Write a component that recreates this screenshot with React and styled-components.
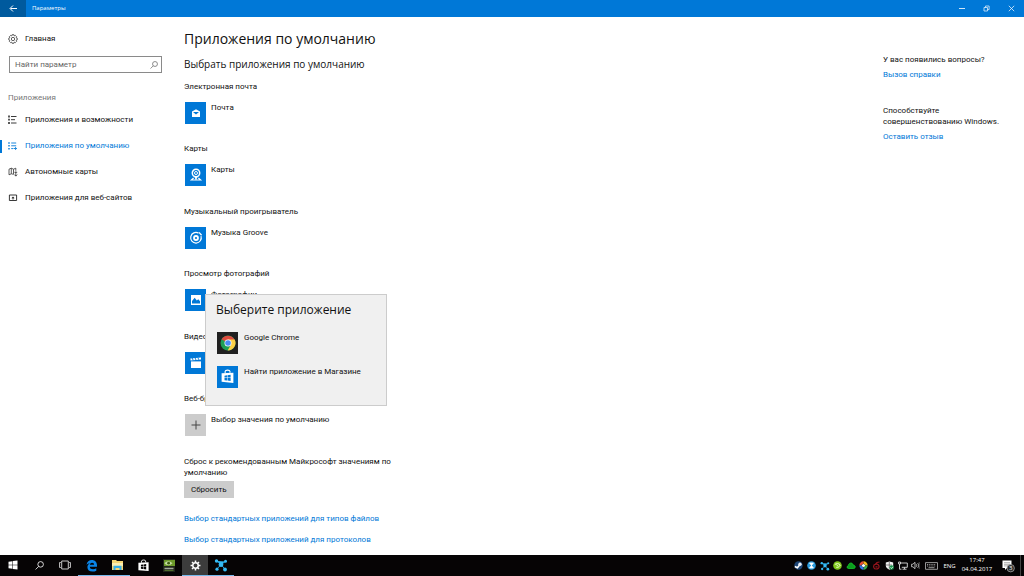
import styled, { createGlobalStyle } from "styled-components";

const sections = [
  { label: "Электронная почта", app: "Почта", icon: <MailIcon /> },
  { label: "Карты", app: "Карты", icon: <MapsIcon /> },
  { label: "Музыкальный проигрыватель", app: "Музыка Groove", icon: <GrooveIcon /> },
  { label: "Просмотр фотографий", app: "Фотографии", icon: <PhotoIcon /> },
  { label: "Видео", app: "Кино и ТВ", icon: <VideoIcon /> },
];

const menu = [
  { text: "Приложения и возможности", icon: <ListIcon /> },
  { text: "Приложения по умолчанию", icon: <DefaultsIcon />, active: true },
  { text: "Автономные карты", icon: <OfflineMapIcon /> },
  { text: "Приложения для веб-сайтов", icon: <SitesIcon /> },
];

const pinned = [
  { name: "Пуск", icon: <WindowsIcon /> },
  { name: "Поиск", icon: <SearchIcon size={9} /> },
  { name: "Представление задач", icon: <TaskViewIcon /> },
  { name: "Microsoft Edge", icon: <EdgeIcon />, open: true },
  { name: "Проводник", icon: <FolderIcon />, open: true },
  { name: "Магазин", icon: <StoreIcon size={13} hole="#060405" /> },
  { name: "NVIDIA", icon: <NvidiaIcon /> },
  { name: "Параметры", icon: <CogIcon />, open: true, current: true },
  { name: "Монитор", icon: <NodesIcon size={14} />, open: true },
];

const tray = [
  { name: "Steam", icon: <SteamIcon /> },
  { name: "Bluetooth", icon: <BlueIcon /> },
  { name: "Монитор", icon: <NodesIcon size={10} /> },
  { name: "Торрент", icon: <LimeIcon /> },
  { name: "Облако", icon: <CloudIcon /> },
  { name: "Цвета", icon: <ColorIcon /> },
  { name: "Игры", icon: <RedIcon /> },
  { name: "Защитник", icon: <ShieldIcon /> },
  { name: "Сеть", icon: <NetworkIcon /> },
  { name: "Громкость", icon: <SpeakerIcon /> },
];

export default function App() {
  return (
    <>
      <GlobalStyle />
      <Window>
        <TitleBar>
          <BackButton aria-label="Назад">
            <svg width="9" height="9" viewBox="0 0 9 9" fill="none" stroke="#fff">
              <path d="M8 4.5H1.5M4 1.5L1 4.5l3 3" />
            </svg>
          </BackButton>
          <WindowName>Параметры</WindowName>
          <WindowButton aria-label="Свернуть">
            <svg width="7" height="7" viewBox="0 0 7 7" stroke="#cfe5f8">
              <path d="M1 3.5h6" />
            </svg>
          </WindowButton>
          <WindowButton aria-label="Восстановить">
            <svg width="7" height="7" viewBox="0 0 7 7" fill="none" stroke="#dcecfa">
              <path d="M1 2.5h3.5v3.5H1zM2.5 2.5V1h3.6v3.6H4.5" strokeWidth=".8" />
            </svg>
          </WindowButton>
          <WindowButton aria-label="Закрыть">
            <svg width="7" height="7" viewBox="0 0 7 7" stroke="#e6f2fc">
              <path d="M.8.8l5.4 5.4M6.2.8L.8 6.2" strokeWidth=".8" />
            </svg>
          </WindowButton>
        </TitleBar>

        <Body>
          <Sidebar>
            <HomeLink href="#home">
              <HomeIcon />
              Главная
            </HomeLink>
            <SearchBox>
              <SearchInput
                type="text"
                aria-label="Найти параметр"
                placeholder="Найти параметр"
              />
              <SearchIcon size={8} color="#666" />
            </SearchBox>
            <MenuTitle>Приложения</MenuTitle>
            <Menu>
              {menu.map((item) => (
                <MenuLink key={item.text} href="#menu" $active={item.active}>
                  {item.icon}
                  {item.text}
                </MenuLink>
              ))}
            </Menu>
          </Sidebar>

          <Content>
            <Title>Приложения по умолчанию</Title>
            <Subtitle>Выбрать приложения по умолчанию</Subtitle>
            <Sections>
              {sections.map((section) => (
                <Section key={section.label}>
                  <SectionLabel>{section.label}</SectionLabel>
                  <AppButton>
                    <Tile>{section.icon}</Tile>
                    {section.app}
                  </AppButton>
                </Section>
              ))}
              <Section>
                <SectionLabel>Веб-браузер</SectionLabel>
                <AppButton>
                  <Tile $color="#cccccc">
                    <PlusIcon />
                  </Tile>
                  Выбор значения по умолчанию
                </AppButton>
                <Popup role="dialog" aria-label="Выберите приложение">
                  <PopupTitle>Выберите приложение</PopupTitle>
                  <AppButton>
                    <Tile $color="#202020">
                      <ChromeIcon />
                    </Tile>
                    Google Chrome
                  </AppButton>
                  <AppButton>
                    <Tile>
                      <StoreIcon size={15} hole="#0078d7" />
                    </Tile>
                    Найти приложение в Магазине
                  </AppButton>
                </Popup>
              </Section>
            </Sections>
            <ResetText>
              Сброс к рекомендованным Майкрософт значениям по умолчанию
            </ResetText>
            <ResetButton>Сбросить</ResetButton>
            <Links>
              <TextLink href="#types">
                Выбор стандартных приложений для типов файлов
              </TextLink>
              <TextLink href="#protocols">
                Выбор стандартных приложений для протоколов
              </TextLink>
            </Links>
          </Content>

          <Help>
            <HelpBlock>
              <p>У вас появились вопросы?</p>
              <TextLink href="#help">Вызов справки</TextLink>
            </HelpBlock>
            <HelpBlock>
              <p>Способствуйте совершенствованию Windows.</p>
              <TextLink href="#feedback">Оставить отзыв</TextLink>
            </HelpBlock>
          </Help>
        </Body>

        <Taskbar>
          {pinned.map((app) => (
            <TaskButton
              key={app.name}
              aria-label={app.name}
              $open={app.open}
              $current={app.current}
            >
              {app.icon}
            </TaskButton>
          ))}
          <Tray>
            {tray.map((item) => (
              <TrayButton key={item.name} aria-label={item.name}>
                {item.icon}
              </TrayButton>
            ))}
            <TrayButton $width="18px" aria-label="Клавиатура">
              <KeyboardIcon />
            </TrayButton>
            <TrayButton $width="19px">ENG</TrayButton>
            <Clock>
              <span>17:47</span>
              <span>04.04.2017</span>
            </Clock>
            <TrayButton $width="25px" aria-label="Центр уведомлений">
              <NoticeIcon />
            </TrayButton>
            <ShowDesktop aria-label="Показать рабочий стол" />
          </Tray>
        </Taskbar>
      </Window>
    </>
  );
}

function HomeIcon() {
  return (
    <svg width="10" height="10" viewBox="0 0 20 20" fill="none" stroke="#444" strokeWidth="1.7">
      <path d="M8 1.5h4l.6 2.3 2.1-1 2.6 2.8-1.1 2 2.3.8v3.2l-2.3.8 1.1 2.2-2.6 2.7-2.2-1.1-.6 2.3H8l-.7-2.3-2.1 1.1-2.6-2.7 1.1-2.2-2.2-.8V8.4l2.2-.8-1.1-2 2.6-2.8 2.2 1z" />
      <circle cx="10" cy="10" r="3.3" />
    </svg>
  );
}

function SearchIcon({ size, color = "#fff" }) {
  return (
    <svg width={size} height={size} viewBox="0 0 12 12" fill="none" stroke={color} strokeWidth="1.1">
      <circle cx="7.5" cy="4.5" r="3.7" />
      <path d="M4.9 7.2L.8 11.3" />
    </svg>
  );
}

function ListIcon() {
  return (
    <svg width="10" height="10" viewBox="0 0 10 10" stroke="#222">
      <path d="M3 1.5h5.5M3 4.7h4M3 8h5.5" strokeWidth=".9" />
      <path d="M1 .6v1.8M1 3.8v1.8M1 7.1v1.8" strokeWidth="1.5" />
    </svg>
  );
}

function DefaultsIcon() {
  return (
    <svg width="10" height="10" viewBox="0 0 10 10" fill="none" stroke="#0078d7">
      <path d="M3.2 2h5M3.2 4.8h5M3.2 7.6h1.8M5.5 7.5h3M7.2 6.2l1.4 1.3-1.4 1.3" strokeWidth=".9" />
      <path d="M1 1.2v1.5M1 4v1.5M1 6.9v1.5" strokeWidth="1.4" />
    </svg>
  );
}

function OfflineMapIcon() {
  return (
    <svg width="10" height="10" viewBox="0 0 10 10" fill="none" stroke="#333" strokeWidth=".8">
      <path d="M5.5 7.3L3.3 6.8 1 7.8V2.2l2.3-1 2.2 1 2.3-1v2.6M3.3 1.2v5.6M5.5 2.2v5.1" />
      <path d="M7.8 4.5v4.6M6.4 7.6l1.4 1.5 1.4-1.5M6.4 5.3h2.8" />
    </svg>
  );
}

function SitesIcon() {
  return (
    <svg width="10" height="10" viewBox="0 0 10 10" fill="none" stroke="#222" strokeWidth=".9">
      <path d="M1.4 2h7.2v5.500H1.400z" />
      <path d="M5 6.500V4.500" />
      <path d="M3.4 5.2L5 3.500l1.600 1.700z" fill="#222" stroke="none" />
    </svg>
  );
}

function MailIcon() {
  return (
    <svg width="22" height="22" viewBox="0 0 22 22">
      <path d="M7 9.6L11 7.2l4 2.4V15H7z" fill="#fff" />
      <path d="M8 10h6l-3 2.5z" fill="#0078d7" />
    </svg>
  );
}

function MapsIcon() {
  return (
    <svg width="22" height="22" viewBox="0 0 22 22" fill="none" stroke="#fff">
      <circle cx="11" cy="9" r="3.7" strokeWidth="1.5" />
      <circle cx="11" cy="9" r="1.5" strokeWidth="1" />
      <path d="M10 12.5h2l-1 2.5zM8.6 14l-2.2 2h9.2l-2.2-2" strokeWidth="1.2" />
    </svg>
  );
}

function GrooveIcon() {
  return (
    <svg width="22" height="22" viewBox="0 0 22 22" fill="none" stroke="#fff">
      <path d="M13.5 6.1a5.3 5.3 0 1 0 2.5 3" strokeWidth="1.2" />
      <circle cx="11" cy="11" r="2" strokeWidth="1.8" />
      <path d="M14 5.4l2.6 2.8" strokeWidth="1.3" />
    </svg>
  );
}

function PhotoIcon() {
  return (
    <svg width="22" height="22" viewBox="0 0 22 22">
      <path d="M6 6h10v10H6z" fill="#fff" />
      <path d="M7 14.500V12l2.700-3.200 2.100 2.700 1.500-1.300 1.700 2v2.300z" fill="#0078d7" />
    </svg>
  );
}

function VideoIcon() {
  return (
    <svg width="22" height="22" viewBox="0 0 22 22">
      <path d="M6 9.4h10V16H6z" fill="#fff" />
      <path d="M5.4 6.6L16 5.4v2L5.6 8.5z" fill="#fff" />
      <path d="M7.2 6l1 2.4M10 5.7l1 2.4M12.8 5.4l1 2.4" stroke="#0078d7" strokeWidth=".9" />
    </svg>
  );
}

function PlusIcon() {
  return (
    <svg width="22" height="22" viewBox="0 0 22 22" stroke="#444">
      <path d="M6.5 11h9M11 6.5v9" strokeWidth="1" />
    </svg>
  );
}

function ChromeIcon() {
  return (
    <svg width="16" height="16" viewBox="0 0 16 16">
      <circle cx="8" cy="8" r="7.5" fill="#1e9e57" />
      <path d="M8 8L1.5 4.2A7.5 7.5 0 0 1 14.5 4.6z" fill="#dd4b3e" />
      <path d="M8 4.6h6.7A7.5 7.5 0 0 1 7.6 15.5L11 9.7z" fill="#fdd045" />
      <circle cx="8" cy="8" r="3.5" fill="#fff" />
      <circle cx="8" cy="8" r="2.8" fill="#4a8cf5" />
    </svg>
  );
}

function StoreIcon({ size, hole }) {
  return (
    <svg width={size} height={size} viewBox="0 0 14 14">
      <path d="M1.5 4L12.5 3.4V13L1.5 12z" fill="#fff" />
      <path d="M4.8 4V2.2C5 .8 9 .6 9.3 2.1v1.5" fill="none" stroke="#fff" />
      <path d="M4.200 6.2l2.3-.3V8H4.2zM7 5.8l2.9-.4V8H7zM4.2 8.5h2.3v2.2l-2.3-.3zM7 8.5h2.9v2.7L7 10.8z" fill={hole} />
    </svg>
  );
}

function WindowsIcon() {
  return (
    <svg width="10" height="10" viewBox="0 0 10 10" fill="#fff">
      <path d="M.5 1.7l3.8-.5v3.5H.5zM4.8 1.1L9.5.5v4.2H4.8zM.5 5.2h3.8v3.6L.5 8.3zM4.8 5.2h4.7v4.3L4.8 8.9z" />
    </svg>
  );
}

function TaskViewIcon() {
  return (
    <svg width="12" height="10" viewBox="0 0 12 10" fill="none" stroke="#ddd" strokeWidth=".9">
      <path d="M2.7 1h6.6v8H2.7zM1.8 2.5H.6v5h1.2M10.2 2.5h1.2v5h-1.2" />
    </svg>
  );
}

function EdgeIcon() {
  return (
    <svg width="13" height="13" viewBox="0 0 13 13">
      <path
        d="M1.5 6C2 2.8 4 1 6.8 1 10 1 12 3.200 12 6.300v1.400H4.800c.1 1.800 1.500 2.500 3.200 2.500 1.200 0 2.300-.3 3.300-.9v2.400c-1 .6-2.400.9-3.900.9C4.300 12.600 2.400 11 2.400 8.300c0-1.800.9-3.200 2.500-4C3.300 4.500 2.200 5 1.500 6zm3.400-.3h4.200c0-1.300-.7-2-2-2-1.200 0-2 .8-2.200 2z"
        fill="#0a84e6"
      />
    </svg>
  );
}

function FolderIcon() {
  return (
    <svg width="13" height="12" viewBox="0 0 13 12">
      <path d="M1 1h4l1 1h6v9H1z" fill="#f6d673" />
      <path d="M1 4h11v3H1z" fill="#fdeeb0" />
      <path d="M2.500 11V6.800h8V11H8.500V9h-4v2z" fill="#38aee6" />
    </svg>
  );
}

function NvidiaIcon() {
  return (
    <svg width="12" height="13" viewBox="0 0 12 13">
      <path d="M0 0h12v13H0z" fill="#20261b" />
      <path d="M1 1h11v6H1z" fill="#6c9a2a" />
      <path d="M1.500 4.200c2-2.700 5.500-2.700 8 0-2.500 2.600-6 2.600-8 0z" fill="#c3dba0" />
      <circle cx="5.600" cy="4.200" r="1.400" fill="#3c5a14" />
      <path d="M1.500 9.500h9" stroke="#a3a99b" strokeWidth="1.500" />
      <path d="M1.500 11.500h9" stroke="#4f6b2c" />
    </svg>
  );
}

function CogIcon() {
  return (
    <svg width="11" height="11" viewBox="0 0 12 12" fill="none" stroke="#fff">
      <circle cx="6" cy="6" r="3" strokeWidth="1.7" />
      <path
        d="M6 .6v2M6 9.400v2M.6 6h2M9.400 6h2M2.200 2.200l1.400 1.400M8.400 8.400l1.400 1.400M9.800 2.200L8.400 3.600M3.600 8.400L2.200 9.800"
        strokeWidth="1.700"
      />
    </svg>
  );
}

function NodesIcon({ size }) {
  return (
    <svg width={size} height={size} viewBox="0 0 14 14" stroke="#1c9ad8" fill="#35baf4">
      <path d="M2.500 3L7 6.500l4.500-3M7 6.500l-4 4.500M7 6.500l4 4.800" />
      <g stroke="none">
        <circle cx="2.500" cy="3" r="1.700" />
        <circle cx="11.500" cy="3.200" r="1.500" />
        <circle cx="7" cy="6.700" r="2.400" />
        <circle cx="3" cy="11.200" r="1.600" />
        <circle cx="11" cy="11.500" r="1.900" />
      </g>
    </svg>
  );
}

function SteamIcon() {
  return (
    <svg width="9" height="9" viewBox="0 0 9 9">
      <circle cx="4.500" cy="4.500" r="4.200" fill="#1d4575" />
      <path d="M.8 5.500l2.600 1.200L6 3.500" fill="none" stroke="#fff" strokeWidth="1.500" />
      <circle cx="6" cy="3.200" r="1.700" fill="#e9eff7" />
    </svg>
  );
}

function BlueIcon() {
  return (
    <svg width="9" height="9" viewBox="0 0 9 9">
      <circle cx="4.500" cy="4.500" r="4.300" fill="#2b9bdc" />
      <path d="M2.600 2h3.800L2.600 7h3.800z" fill="#fff" stroke="#fff" strokeWidth=".8" />
    </svg>
  );
}

function LimeIcon() {
  return (
    <svg width="9" height="9" viewBox="0 0 9 9">
      <circle cx="4.500" cy="4.500" r="4.300" fill="#7fc61c" />
      <path d="M1.800 3.500c2-1.500 4-1 5.500.5-1 2-2.500 2.800-4 2.300M3.500 3.500l1.500 2" fill="none" stroke="#eaffc9" />
    </svg>
  );
}

function CloudIcon() {
  return (
    <svg width="10" height="9" viewBox="0 0 10 9">
      <path d="M2.500 7.500C.8 7.500.5 5 2.300 4.700 2.500 1.500 6.500 1 7.200 4c2.800.2 2.600 3.500.5 3.500z" fill="#0c9d1e" stroke="#18d62e" strokeWidth=".7" />
    </svg>
  );
}

function ColorIcon() {
  return (
    <svg width="9" height="9" viewBox="0 0 9 9" fill="none" strokeWidth="2.300">
      <path d="M1.500 4.500a3 3 0 0 1 3-3" stroke="#e84b37" />
      <path d="M4.500 1.500a3 3 0 0 1 3 3" stroke="#f6b619" />
      <path d="M7.500 4.500a3 3 0 0 1-3 3" stroke="#3aab4b" />
      <path d="M4.500 7.500a3 3 0 0 1-3-3" stroke="#3476e8" />
      <circle cx="4.500" cy="4.500" r="1.600" fill="#fff" stroke="none" />
    </svg>
  );
}

function RedIcon() {
  return (
    <svg width="9" height="9" viewBox="0 0 9 9" fill="none" stroke="#98141c" strokeWidth="1.200">
      <path d="M7.500 1C5 1 4 2 3.500 3M2 4c2-1.500 4.500-1 5 1s-1 3-3 3-3-2-2-4zM3.500 5.800h2" />
    </svg>
  );
}

function ShieldIcon() {
  return (
    <svg width="9" height="9" viewBox="0 0 9 9">
      <path d="M.8 1.500L4.500.4l3.700 1.100v3C8.200 6.500 6.500 8 4.500 8.800 2.500 8 .8 6.500.8 4.500z" fill="#f3f3f3" />
      <path d="M4.300.8v7M1 4h6" stroke="#555" strokeWidth=".7" />
      <circle cx="6.700" cy="6.500" r="2.200" fill="#19964b" />
      <path d="M5.500 6.500l1 1 1.500-1.800" fill="none" stroke="#fff" strokeWidth=".8" />
    </svg>
  );
}

function NetworkIcon() {
  return (
    <svg width="10" height="9" viewBox="0 0 10 9" fill="none" stroke="#ddd" strokeWidth=".9">
      <path d="M2.500 2h6.800v4.300H3.800M6.500 6.300v1.800M4.500 8.200h4M.6 1v2h1.900V1zM1.500 3v5.200h2" />
    </svg>
  );
}

function SpeakerIcon() {
  return (
    <svg width="9" height="9" viewBox="0 0 9 9" fill="none" stroke="#ddd" strokeWidth=".8">
      <path d="M.6 3.200h1.300L4 1.300v6.400L1.900 5.800H.6zM5.300 3.200c.6.800.6 1.800 0 2.600M6.700 2.100c1.200 1.500 1.200 3.300 0 4.800" />
      <path d="M8 1c1.300 2.200 1.300 4.800 0 7" stroke="#666" />
    </svg>
  );
}

function KeyboardIcon() {
  return (
    <svg width="13" height="8" viewBox="0 0 13 8" fill="none" stroke="#bbb" strokeWidth=".8">
      <path d="M.5.6h12v6.700H.5z" />
      <path d="M2 2.500h9M2 4h9" strokeDasharray="1 .8" />
      <path d="M3.500 5.700h6" />
    </svg>
  );
}

function NoticeIcon() {
  return (
    <svg width="14" height="14" viewBox="0 0 14 14">
      <path d="M1.500 1.500h9v7.500H6L4 11V9H1.500z" fill="#fff" />
      <path d="M3 3.700h6M3 5.300h6M3 6.900h4" stroke="#777" strokeWidth=".6" />
      <circle cx="9.700" cy="9.200" r="3.700" fill="#2c2c2c" stroke="#b5b5b5" strokeWidth=".7" />
      <text x="9.700" y="11.300" fill="#fff" fontSize="6" textAnchor="middle">3</text>
    </svg>
  );
}

const headingFont = `"Open Sans", "Noto Sans", sans-serif`;

const GlobalStyle = createGlobalStyle`
  * {
    box-sizing: border-box;
  }

  body {
    margin: 0;
    background: #ffffff;
    color: #111111;
    font-family: Roboto, "Open Sans", sans-serif;
    font-size: 8px;
    line-height: 12px;
  }

  h1, h2, h3, p {
    margin: 0;
    font-weight: 400;
  }

  button, input {
    font: inherit;
    color: inherit;
    border: none;
    padding: 0;
    background: none;
  }

  svg {
    display: block;
    flex-shrink: 0;
  }
`;

const Window = styled.div`
  min-height: 100vh;
  display: flex;
  flex-direction: column;
`;

const TitleBar = styled.header`
  height: 17px;
  display: flex;
  align-items: stretch;
  background: #0078d7;
  color: #ffffff;
`;

const BackButton = styled.button`
  width: 26px;
  display: flex;
  align-items: center;
  justify-content: center;
  background: #005a9e;
`;

const WindowName = styled.div`
  flex: 1;
  padding-left: 6px;
  font-family: ${headingFont};
  font-size: 6px;
  line-height: 17px;
`;

const WindowButton = styled.button`
  width: 25px;
  display: flex;
  align-items: center;
  justify-content: center;
`;

const Body = styled.div`
  flex: 1;
  display: flex;
`;

const Sidebar = styled.nav`
  width: 172px;
  flex-shrink: 0;
  padding-top: 16px;
`;

const HomeLink = styled.a`
  display: flex;
  align-items: center;
  gap: 7px;
  padding-left: 8px;
  color: inherit;
  text-decoration: none;
`;

const SearchBox = styled.div`
  height: 17px;
  margin: 11px 10px 0 9px;
  padding: 0 3px 0 5px;
  display: flex;
  align-items: center;
  border: 1px solid #8a8a8a;
`;

const SearchInput = styled.input`
  flex: 1;
  min-width: 0;
  outline: none;

  &::placeholder {
    color: #666666;
  }
`;

const MenuTitle = styled.h3`
  margin-top: 19px;
  padding-left: 8px;
  font-size: 8px;
  color: #767676;
`;

const Menu = styled.div`
  padding-top: 3px;
`;

const MenuLink = styled.a`
  height: 26px;
  position: relative;
  display: flex;
  align-items: center;
  gap: 7px;
  padding-left: 8px;
  color: ${(props) => (props.$active ? "#0078d7" : "inherit")};
  text-decoration: none;

  &::before {
    content: "";
    position: absolute;
    left: 0;
    width: 2px;
    height: 13px;
    background: ${(props) => (props.$active ? "#0078d7" : "none")};
  }
`;

const Content = styled.main`
  flex: 1;
  display: flex;
  flex-direction: column;
  align-items: flex-start;
  padding: 12px 12px 9px;
`;

const Title = styled.h1`
  font-family: ${headingFont};
  font-size: 14px;
  line-height: 20px;
`;

const Subtitle = styled.h2`
  margin-top: 8px;
  font-family: ${headingFont};
  font-size: 10px;
  line-height: 14px;
`;

const Sections = styled.div`
  flex: 1;
  display: flex;
  flex-direction: column;
  justify-content: space-between;
  padding-top: 10px;
`;

const Section = styled.section`
  position: relative;
`;

const SectionLabel = styled.h3`
  font-size: 8px;
`;

const AppButton = styled.button`
  display: flex;
  align-items: flex-start;
  gap: 5px;
  margin: 9px 0 0 1px;
  text-align: left;
`;

const Tile = styled.span`
  width: 21px;
  height: 22px;
  display: flex;
  align-items: center;
  justify-content: center;
  background: ${(props) => props.$color || "#0078d7"};
`;

const Popup = styled.div`
  position: absolute;
  left: 21px;
  bottom: 30px;
  width: 182px;
  height: 112px;
  padding: 5px 10px;
  background: #f0f0f0;
  border: 1px solid #cccccc;

  ${AppButton} {
    gap: 6px;
    margin-top: 12px;
  }
`;

const PopupTitle = styled.h2`
  font-family: ${headingFont};
  font-size: 12px;
  line-height: 20px;
`;

const ResetText = styled.p`
  max-width: 210px;
  margin-top: 20px;
  line-height: 11px;
`;

const ResetButton = styled.button`
  height: 17px;
  margin-top: 3px;
  padding: 0 7px;
  background: #cccccc;
`;

const Links = styled.div`
  display: flex;
  flex-direction: column;
  gap: 9px;
  margin-top: 15px;
`;

const TextLink = styled.a`
  color: #0078d7;
  text-decoration: none;
`;

const Help = styled.aside`
  width: 141px;
  display: flex;
  flex-direction: column;
  gap: 25px;
  padding: 37px 20px 0 0;
`;

const HelpBlock = styled.div`
  display: flex;
  flex-direction: column;
  gap: 4px;
  line-height: 11px;
`;

const Taskbar = styled.footer`
  height: 21px;
  display: flex;
  background: #060405;
  color: #ffffff;
`;

const TaskButton = styled.button`
  width: 26px;
  display: flex;
  align-items: center;
  justify-content: center;
  background: ${(props) => (props.$current ? "#3c3c3c" : "none")};
  border-bottom: 1px solid ${(props) => (props.$open ? "#76b9ed" : "transparent")};
`;

const Tray = styled.div`
  display: flex;
  margin-left: auto;
  font-family: ${headingFont};
  font-size: 6px;
`;

const TrayButton = styled.button`
  width: ${(props) => props.$width || "13px"};
  display: flex;
  align-items: center;
  justify-content: center;
`;

const Clock = styled.time`
  width: 36px;
  display: flex;
  flex-direction: column;
  align-items: center;
  padding-top: 1px;
  line-height: 9px;
`;

const ShowDesktop = styled.button`
  width: 4px;
  border-left: 1px solid #444444;
`;
